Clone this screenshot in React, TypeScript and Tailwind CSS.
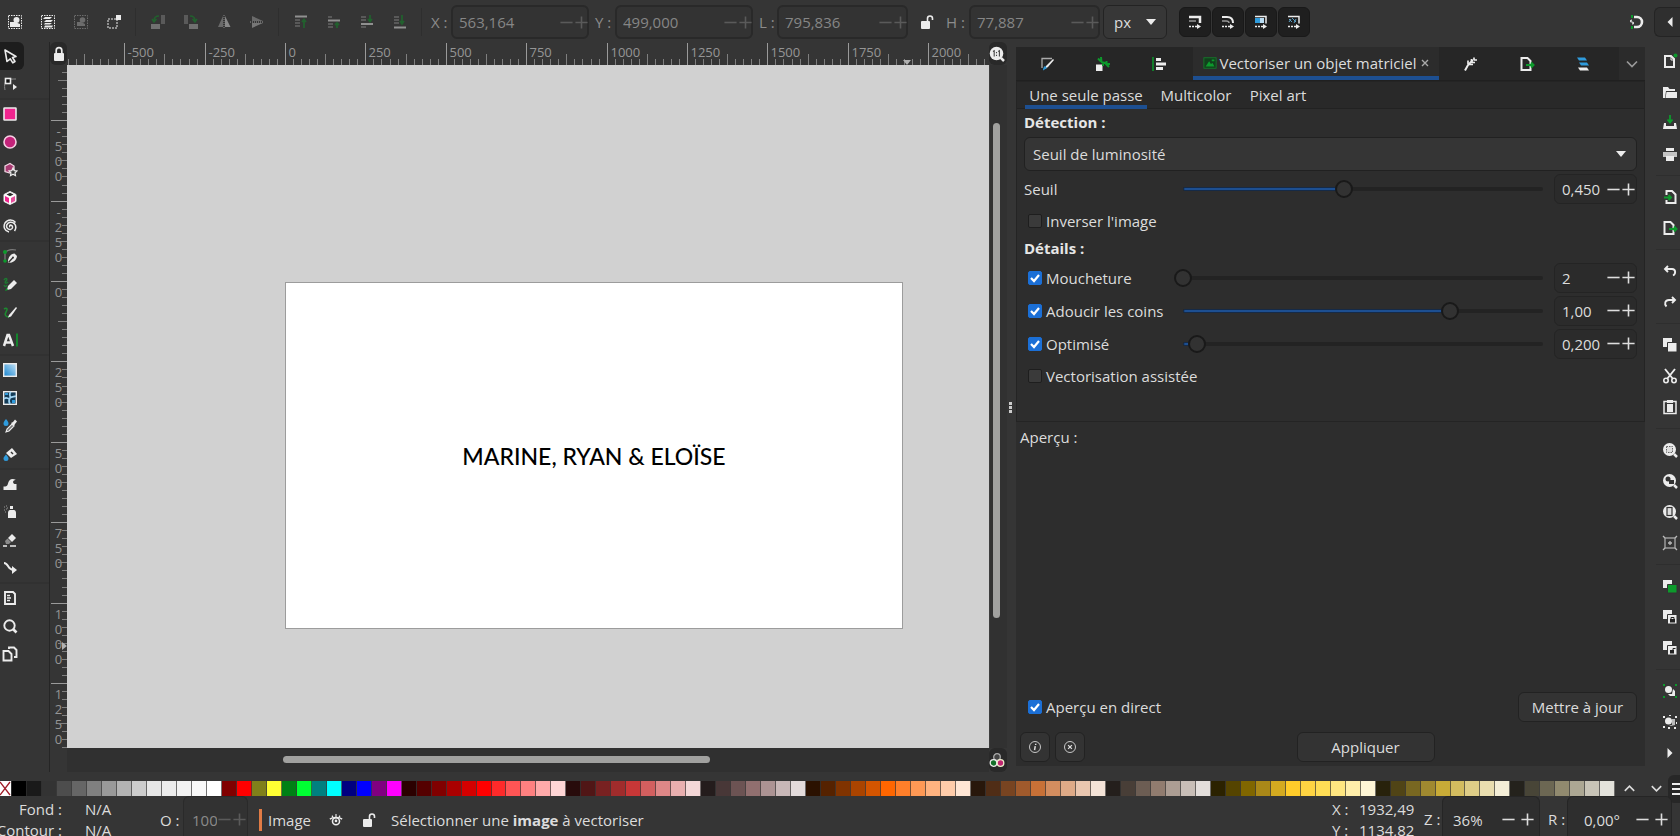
import React, { useEffect, useRef, useState } from "react";

const W = "#ececec";
const G = "#0d9a2c";
const B = "#2f9bdc";
const P = "#f0258f";

const icons: Record<string, React.ReactNode> = {
  selectAll: (
    <>
      <rect x="1.5" y="1.5" width="13" height="13" fill="none" stroke={W} strokeDasharray="1.5 1" />
      <circle cx="9.5" cy="6" r="3" fill={W} />
      <path d="M3 8h5l5 2v3H3z" fill={W} />
    </>
  ),
  selectLayers: (
    <>
      <rect x="1.5" y="1.5" width="13" height="13" fill="none" stroke={W} strokeDasharray="1.5 1" />
      <path d="M5 3h7l-2 2H3zM6 6h7l-2 2H4zM5 9h7l-2 1.600H4zM5 11.500h8l-1 2H4z" fill={W} />
    </>
  ),
  deselect: (
    <g opacity=".3">
      <rect x="1.500" y="1.500" width="13" height="13" fill="none" stroke={W} strokeDasharray="1.5 1" />
      <circle cx="9.500" cy="6" r="2.800" fill={W} />
      <path d="M4 8h4l4 2v2H4z" fill={W} />
    </g>
  ),
  touch: (
    <>
      <rect x="2" y="5" width="9" height="9" fill="none" stroke={W} strokeDasharray="2 1" />
      <rect x="10" y="1" width="5" height="5" fill={W} />
    </>
  ),
  rotL: (
    <>
      <rect x="1" y="10" width="9" height="5" fill="#707070" />
      <rect x="11" y="1" width="4" height="9" fill="#5a5a5a" />
      <path d="M9 2C5 2 4 4 4 7M2 5l2 3 2.500-3" fill="none" stroke="#22602e" strokeWidth="1.500" />
    </>
  ),
  rotR: (
    <>
      <rect x="6" y="10" width="9" height="5" fill="#707070" />
      <rect x="1" y="1" width="4" height="9" fill="#5a5a5a" />
      <path d="M7 2c4 0 5 2 5 5M9.500 5l2.500 3 2-3" fill="none" stroke="#22602e" strokeWidth="1.500" />
    </>
  ),
  flipH: (
    <>
      <path d="M7 2v11H2z" fill="#6a6a6a" />
      <path d="M9 2v11h5.500z" fill="#888" />
      <path d="M8 1v14" stroke="#888" strokeDasharray="1 1" />
    </>
  ),
  flipV: (
    <>
      <path d="M3 2v5h11z" fill="#6a6a6a" />
      <path d="M3 14V9h11z" fill="#777" />
      <path d="M1 8h14" stroke="#999" strokeDasharray="1 1" />
    </>
  ),
  toTop: (
    <>
      <path d="M2 2.500h12" stroke="#909090" strokeWidth="2" />
      <path d="M2 6h5M2 9h5M2 12h5" stroke="#666" strokeWidth="1.500" />
      <path d="M11 14V6M9 8l2-2.500L13 8" fill="none" stroke="#22602e" strokeWidth="1.800" />
    </>
  ),
  raise: (
    <>
      <path d="M2 6.500h12" stroke="#909090" strokeWidth="2" />
      <path d="M2 3h4M2 10h5M2 13h5" stroke="#666" strokeWidth="1.500" />
      <path d="M11 14V9M9 11l2-2 2 2" fill="none" stroke="#22602e" strokeWidth="1.800" />
    </>
  ),
  lower: (
    <>
      <path d="M2 10h12" stroke="#909090" strokeWidth="2" />
      <path d="M2 3h5M2 6h5M2 13h5" stroke="#666" strokeWidth="1.500" />
      <path d="M11 1v6M9 5l2 2.500L13 5" fill="none" stroke="#22602e" strokeWidth="1.800" />
    </>
  ),
  toBottom: (
    <>
      <path d="M2 13.500h12" stroke="#909090" strokeWidth="2" />
      <path d="M2 3h5M2 6h5M2 9h5" stroke="#666" strokeWidth="1.500" />
      <path d="M10 1v9M8 7l2 3 2-3" fill="none" stroke="#22602e" strokeWidth="1.800" />
    </>
  ),
  unlock: (
    <>
      <rect x="2" y="7" width="9" height="8" rx="1" fill={W} />
      <path d="M8.500 8V4.500a2.500 2.500 0 0 1 5 0V6" fill="none" stroke={W} strokeWidth="1.600" />
    </>
  ),
  lock: (
    <>
      <rect x="3" y="7" width="10" height="8" rx="1" fill={W} />
      <path d="M5.200 8V4.500a2.800 2.800 0 0 1 5.600 0V8" fill="none" stroke={W} strokeWidth="1.700" />
    </>
  ),
  scaleStroke: (
    <>
      <path d="M2 3h11v6" fill="none" stroke={W} strokeWidth="2.500" />
      <path d="M2 7h7" stroke="#999" strokeWidth="1.500" />
      <path d="M2 12.500h8" stroke={W} strokeWidth="1.600" strokeDasharray="2 1" />
      <path d="M10 10l4 2.500-4 2.500z" fill={W} />
    </>
  ),
  scaleCorner: (
    <>
      <path d="M2 3h5c4 0 6 2 6 6" fill="none" stroke={W} strokeWidth="2" />
      <path d="M2 7h4c2 0 3 1 3 2" fill="none" stroke="#999" strokeWidth="1.500" />
      <path d="M2 12.500h8" stroke={W} strokeWidth="1.600" strokeDasharray="2 1" />
      <path d="M10 10l4 2.500-4 2.500z" fill={W} />
    </>
  ),
  scaleGrad: (
    <>
      <path d="M2 2.500h11v7" fill="none" stroke={W} strokeWidth="1.500" />
      <path d="M2 4h5v5H2z" fill={B} />
      <path d="M7 4h4v5H7z" fill="#b9dcf3" />
      <path d="M2 12.500h8" stroke={W} strokeWidth="1.600" strokeDasharray="2 1" />
      <path d="M10 10l4 2.500-4 2.500z" fill={W} />
    </>
  ),
  scalePattern: (
    <>
      <path d="M2 2.500h11v7" fill="none" stroke={W} strokeWidth="1.500" />
      <path d="M3 5l3 3M6 4l4 4M3 8l2-3M8 9l2-4" stroke="#5b9fc4" />
      <path d="M2 12.500h8" stroke={W} strokeWidth="1.600" strokeDasharray="2 1" />
      <path d="M10 10l4 2.500-4 2.500z" fill={W} />
    </>
  ),
  snap: (
    <>
      <path d="M6 3h3a5 5 0 0 1 0 10H6" fill="none" stroke={W} strokeWidth="2.600" />
      <path d="M4 1v3M4 12v3" stroke={G} strokeWidth="2" />
      <path d="M4 6c-2 0-2 2 0 2s2 2 0 2" fill="none" stroke={W} strokeWidth="1.200" />
    </>
  ),
  left: <path d="M10.500 3v10L5.500 8z" fill={W} />,
  right: <path d="M5.500 3v10l5-5z" fill={W} />,
  pointer: <path d="M3 2l11 6.500-3.500 1 2.500 4-2.200 1.300-2.500-4L5 13.500z" fill="#1c1c1c" stroke={W} strokeWidth="1.600" strokeLinejoin="round" />,
  node: (
    <>
      <path d="M3 14C2 9 3 5 5 4s6-1 9-1" fill="none" stroke="#888" />
      <rect x="3.500" y="2.500" width="5" height="5" fill="#111" stroke={W} strokeWidth="1.600" />
      <path d="M11 8l4 3-4 3z" fill={W} />
    </>
  ),
  rect: <rect x="2" y="2" width="12" height="12" rx=".5" fill={P} stroke={W} strokeWidth="1.600" />,
  circle: <circle cx="8" cy="8" r="6" fill="#c4237a" stroke="#f6cfe3" strokeWidth="1.600" />,
  star: (
    <>
      <path d="M3 4l5-2.500L12 4v4l-4 3-5-1.500z" fill="#a83a72" stroke="#f0d5e2" strokeWidth="1.300" />
      <path d="M11 6l1.200 2.600 2.800.3-2 2 .5 2.800-2.500-1.400-2.500 1.400.5-2.800-2-2 2.800-.3z" fill="#3a3a3a" stroke={W} strokeWidth="1.200" />
    </>
  ),
  cube: (
    <>
      <path d="M8 1.500l6 3v7l-6 3-6-3v-7z" fill="#fff" stroke={W} />
      <path d="M3 6l4 2v5l-4-2z" fill={P} />
      <path d="M13 6L9 8v5l4-2z" fill="#e6509e" />
      <path d="M8 2.800L11.500 4.500 8 6.300 4.500 4.500z" fill="#2d2d2d" />
    </>
  ),
  spiral: <path d="M8.200 9c-1.200-.6-.4-2.200 1-1.800 2 .6 1.800 3.600-.4 4.200-3 .7-5-2-4-4.500C6 4 10 3.300 12.300 5.600c1.800 2 1.800 5 .2 7.400M7 14C2.500 13 1 8.500 3 5 5.500 1 11 1 13.500 4.500" fill="none" stroke={W} strokeWidth="1.500" />,
  pen: (
    <>
      <path d="M3 14V5c2-3 6-4 11-3" fill="none" stroke="#7c7c7c" strokeWidth="1.200" />
      <circle cx="3" cy="4" r="2" fill={G} />
      <circle cx="3" cy="13" r="1.800" fill={G} />
      <path d="M6 15c-.5-5 2-9 6.500-9.500L15 8c-.5 4-3.500 7-9 7z" fill={W} />
      <path d="M6.500 14.500L11 9.500" stroke="#333" strokeWidth="1.300" />
      <circle cx="11" cy="9.500" r="1" fill="#333" />
    </>
  ),
  pencil: (
    <>
      <path d="M2 4c2-3 4-1 2 1s0 3 2 1M2 9c1 2 2 2 3 0" fill="none" stroke="#1c7a30" strokeWidth="1.400" />
      <path d="M5 14l1-4 6-6 3 3-6 6z" fill={W} />
      <path d="M3 15l1.500-3 1.500 2z" fill={G} />
    </>
  ),
  callig: (
    <>
      <path d="M2 5c3-2 4 0 2 3s0 5 3 5" fill="none" stroke="#1c8a30" strokeWidth="1.600" />
      <path d="M7 11l7-8 1 1-6 8.500-3 1z" fill={W} />
    </>
  ),
  text: (
    <>
      <path d="M2 14L5.500 3h1.500L11 14M4 10.500h5.500" fill="none" stroke={W} strokeWidth="2.500" />
      <path d="M15 1.500v13" stroke={G} strokeWidth="1.600" />
    </>
  ),
  gradient: (
    <>
      <defs>
        <linearGradient id="toolGradient" x1="0" y1="1" x2="1" y2="0">
          <stop offset="0" stopColor="#1583cf" />
          <stop offset="1" stopColor="#c5e3f6" />
        </linearGradient>
      </defs>
      <rect x="1.700" y="1.700" width="12.600" height="12.600" fill="url(#toolGradient)" stroke={W} strokeWidth="1.400" />
    </>
  ),
  mesh: (
    <>
      <rect x="1.700" y="1.700" width="12.600" height="12.600" fill="#123b57" stroke={W} strokeWidth="1.400" />
      <path d="M2 9c3-3 4 1 6-1s4-1 6-2M9 2c-3 2 0 4-1 6s-2 3 0 6" fill="none" stroke="#9fd3f2" strokeWidth="1.700" />
      <path d="M10 10h3v3h-3zM3 3h3v2H3z" fill={B} />
    </>
  ),
  dropper: (
    <>
      <path d="M4 1c2 2.500 2.500 3.500 2.500 4.500a2.500 2.500 0 0 1-5 0C1.500 4.500 2 3.500 4 1z" fill={B} />
      <path d="M4 14l1-3 5-5 2 2-5 5z" fill="#777" stroke={W} strokeWidth="1.100" />
      <path d="M9 5l2-1 2-2.500 2 2L13 6l-1 2z" fill={W} />
    </>
  ),
  bucket: (
    <>
      <path d="M4 7l6-5 5 6-6 4z" fill={W} />
      <path d="M9 6l2 2" stroke="#333" strokeWidth="1.500" />
      <path d="M4 8.500c2 2.500 2.500 3 2.500 4a2.500 2.500 0 0 1-5 0c0-1 .5-1.500 2.500-4z" fill={B} />
    </>
  ),
  tweak: <path d="M1.500 14v-3.500c3 0 4-.5 4.500-3C6.700 3.500 10 1.500 14 4c-3 0-4 2.500-1.500 4H14.500v6z" fill={W} />,
  spray: (
    <>
      <path d="M6 9c0-2 1-3 2-3h4c1 0 2 1 2 3v5H6z" fill={W} />
      <path d="M8 2h3v3H8z" fill={W} />
      <path d="M2 3h1M4 2h1M2 6h1M4 5h1M5 4h1M3 8h1" stroke="#999" />
    </>
  ),
  eraser: (
    <>
      <path d="M6 6l4-4 4 4-4 4z" fill={W} />
      <path d="M3 9l2.500-2.500L9 10l-2 2H4z" fill="#8a8a8a" />
      <path d="M1 14h4M8 14h6" stroke={W} strokeWidth="1.700" />
    </>
  ),
  connector: (
    <>
      <path d="M2 3c5 0 3 7 10 7" fill="none" stroke={W} strokeWidth="2" />
      <path d="M10 6l5 4-5 4z" fill={W} />
    </>
  ),
  measure: (
    <>
      <path d="M3 2h8l2 2v10H3z" fill="none" stroke={W} strokeWidth="1.900" />
      <path d="M5 5.500h3M5 8h4M5 10.500h3" stroke={W} strokeWidth="1.300" />
    </>
  ),
  zoom: (
    <>
      <circle cx="7.500" cy="7.500" r="5.200" fill="none" stroke={W} strokeWidth="1.900" />
      <path d="M11 11l3.500 3.500" stroke={W} strokeWidth="2.600" />
    </>
  ),
  pages: (
    <>
      <path d="M7 3V1.500h5L14.500 4v7H12" fill="none" stroke={W} strokeWidth="1.900" />
      <path d="M1.500 5h5L9.500 8v6.500h-8z" fill="none" stroke={W} strokeWidth="1.900" />
    </>
  ),
  newDoc: (
    <>
      <path d="M3 3h6l3 3v8H3z" fill="none" stroke={W} strokeWidth="2" />
      <path d="M9 3v4h4" fill="none" stroke={W} />
      <circle cx="13.500" cy="2.500" r="2" fill={G} />
    </>
  ),
  open: (
    <>
      <path d="M1 3h5l1.500 2H13v2H4l-1 7H1z" fill={W} />
      <path d="M4.500 8H15v6H3.500z" fill={W} />
    </>
  ),
  save: (
    <>
      <path d="M8 0v7M5.500 4.500L8 7.500l2.500-3" fill="none" stroke={G} strokeWidth="1.800" />
      <path d="M2 8h2v3h8V8h2l1 6H1z" fill={W} />
    </>
  ),
  print: (
    <>
      <path d="M4 2h8v3H4z" fill={W} />
      <path d="M1 6h14v5H1z" fill="#c4c4c4" />
      <path d="M4 10h8v5H4z" fill={W} />
    </>
  ),
  importDoc: (
    <>
      <path d="M4.500 6V2H10l3.500 3.500V14h-9v-3" fill="none" stroke={W} strokeWidth="2" />
      <path d="M2 8.500h7M6.500 6L9 8.500 6.500 11" fill="none" stroke={G} strokeWidth="2" />
    </>
  ),
  exportDoc: (
    <>
      <path d="M2.500 2h6l3 3v9h-9z" fill="none" stroke={W} strokeWidth="2" />
      <path d="M7 9h7M12 6.500L14.500 9 12 11.500" fill="none" stroke={G} strokeWidth="2" />
    </>
  ),
  undo: <path d="M6 3L3 6l3 3M3 6h7c4 0 4 5 1 6.500" fill="none" stroke={W} strokeWidth="1.900" />,
  redo: <path d="M10 3l3 3-3 3M13 6H7c-4 0-5 4-2.500 6.500" fill="none" stroke={W} strokeWidth="1.900" />,
  copy: (
    <>
      <path d="M1 1h9v9H1z" fill={W} />
      <path d="M5.500 5.500h9.500v9.500H5.500z" fill={W} stroke="#333" />
    </>
  ),
  cut: (
    <>
      <path d="M3 1l8 10M13 1L5 11" stroke={W} strokeWidth="1.900" />
      <circle cx="4" cy="12.500" r="2.200" fill="none" stroke={W} strokeWidth="1.600" />
      <circle cx="12" cy="12.500" r="2.200" fill="none" stroke={W} strokeWidth="1.600" />
    </>
  ),
  paste: (
    <>
      <path d="M2 2.500h12v12H2z" fill="none" stroke={W} strokeWidth="1.500" />
      <path d="M5 1h6v3H5zM5 5h6v8H5z" fill={W} />
    </>
  ),
  zoomSel: (
    <>
      <circle cx="7.500" cy="7.500" r="6.500" fill={W} />
      <path d="M12 12l3 3" stroke={W} strokeWidth="2.500" />
      <rect x="4.500" y="4.500" width="6" height="6" fill="#dcdcdc" stroke="#666" strokeDasharray="1.500 1" />
    </>
  ),
  zoomDraw: (
    <>
      <circle cx="7.500" cy="7.500" r="6.500" fill={W} />
      <path d="M12 12l3 3" stroke={W} strokeWidth="2.500" />
      <circle cx="6" cy="6" r="2.500" fill="#333" />
      <path d="M7 7h5v4H7z" fill="#333" />
    </>
  ),
  zoomPage: (
    <>
      <circle cx="7.500" cy="7.500" r="6.500" fill={W} />
      <path d="M12 12l3 3" stroke={W} strokeWidth="2.500" />
      <rect x="5" y="3.500" width="5" height="8" fill="#ddd" stroke="#333" strokeWidth="1.200" />
    </>
  ),
  zoomCenter: (
    <>
      <rect x="3" y="3" width="10" height="10" fill="none" stroke="#aaa" strokeWidth="1.300" />
      <path d="M1 1l2 2M15 1l-2 2M1 15l2-2M15 15l-2-2M8 6v4M6 8h4" stroke="#bbb" strokeWidth="1.300" />
    </>
  ),
  duplicate: (
    <>
      <path d="M1 2h9v8H1z" fill={W} />
      <path d="M5.500 6.500H15V15H5.500z" fill={G} stroke="#333" />
    </>
  ),
  clone: (
    <>
      <path d="M1 1h9v9H1z" fill={W} />
      <path d="M5.500 5.500H15V15H5.500z" fill={W} stroke="#333" />
      <path d="M8 10h5v3.500H8z" fill="#222" />
      <path d="M9 10V8.500h3V10" fill="none" stroke="#222" />
    </>
  ),
  unclone: (
    <>
      <path d="M1 1h9v9H1z" fill={W} />
      <path d="M5.500 5.500H15V15H5.500z" fill={W} stroke="#333" />
      <path d="M8 10h4v3.500H8z" fill="#222" />
      <path d="M11 10V8.500h2.500" fill="none" stroke="#222" />
    </>
  ),
  group: (
    <>
      <path d="M1 1h2v2H1zM13 1h2v2h-2zM1 13h2v2H1zM13 13h2v2h-2z" fill={G} />
      <circle cx="6.500" cy="6.500" r="3.500" fill={W} />
      <path d="M11 6l2 2v5H8l-2-2h4z" fill={W} />
    </>
  ),
  ungroup: (
    <>
      <path d="M1 2h2v2H1zM7 1h2v1H7zM13 2h2v2h-2zM1 12h2v2H1zM6 13h2v2H6zM12 13h2v2h-2zM14 8h1v2h-1z" fill={W} />
      <circle cx="6.500" cy="7" r="3.500" fill={W} />
      <path d="M10 5h3v6l-4 1-2-1h3z" fill="#bbb" />
    </>
  ),
  fillStroke: (
    <>
      <path d="M3 12V2.500h10" fill="none" stroke="#aaa" strokeWidth="1.300" />
      <path d="M14 3l1 1-6 7-3 2 1-3z" fill={W} />
      <path d="M6 10l2 2-4 2.500c0-2 .5-3.500 2-4.500z" fill={B} />
    </>
  ),
  nodeWrench: (
    <>
      <rect x="1" y="8.500" width="6.500" height="6.500" fill={W} />
      <path d="M3 2.500l3 3M6 1l.5 5M6 6l4 1 4 4M11.500 5l0 3 3.500 0M8 7v3" fill="none" stroke={G} strokeWidth="2" />
    </>
  ),
  align: (
    <>
      <path d="M2 1v14" stroke={G} strokeWidth="1.500" />
      <path d="M5 2h5v3H5zM5 6.500h10v3H5zM5 11h7v3H5z" fill={W} />
    </>
  ),
  trace: (
    <>
      <rect x="1" y="2" width="14" height="12" fill="#12401d" stroke="#157a2a" />
      <path d="M3 12l4-6 2 3 2-1 2 4zM10 4h3v2h-3z" fill={G} />
    </>
  ),
  effects: (
    <>
      <path d="M2 14.500L5 9l5-5" fill="none" stroke={W} strokeWidth="2" />
      <path d="M5.500 8.500h4.500M5 8V4.500M8 6.500h4M8.500 5.500V3M11 4h3M11 4V1.500" fill="none" stroke={W} strokeWidth="1.700" />
    </>
  ),
  layers: (
    <>
      <path d="M2 1.500h8l2 3H4z" fill={B} />
      <path d="M4 6.500h8l2 3H6z" fill={B} />
      <path d="M3 11.500h9l2 3H5z" fill={W} />
    </>
  ),
  zoom11: (
    <>
      <circle cx="7.500" cy="7.500" r="6.800" fill={W} />
      <path d="M12 12l3 3" stroke={W} strokeWidth="2.500" />
      <path d="M4 5.500l1.200-.8V10.500M9.200 5.500l1.200-.8V10.500M7.500 6v1.200M7.500 8.800V10" fill="none" stroke="#444" strokeWidth="1.100" />
    </>
  ),
  cms: (
    <>
      <circle cx="8" cy="5" r="3.300" fill="#444" stroke="#aaa" strokeWidth="1.300" />
      <circle cx="4.500" cy="11" r="3.300" fill="#14702a" stroke={W} strokeWidth="1.300" />
      <circle cx="11.500" cy="11" r="3.300" fill="#c02672" stroke="#eec" strokeWidth="1.300" />
    </>
  ),
  info: (
    <>
      <circle cx="8" cy="8" r="6.300" fill="none" stroke="#ccc" strokeWidth="1.100" />
      <path d="M8.800 4.300v1.500M8.300 7l-.8 4.700" stroke="#ddd" strokeWidth="1.700" />
    </>
  ),
  reset: (
    <>
      <circle cx="8" cy="8" r="6.300" fill="none" stroke="#ccc" strokeWidth="1.100" />
      <path d="M5.800 5.800l4.400 4.400M10.200 5.800l-4.400 4.400" stroke="#ddd" strokeWidth="1.400" />
    </>
  ),
  eye: (
    <>
      <path d="M1 7c3-2.500 11-2.500 14 0" fill="none" stroke={W} strokeWidth="1.600" />
      <circle cx="8" cy="9.500" r="4" fill="none" stroke={W} strokeWidth="1.800" />
      <circle cx="8" cy="9" r="1.500" fill={W} />
      <path d="M8 1v4M3.500 3l1 2M12.500 3l-1 2" stroke={W} strokeWidth="1.300" />
    </>
  ),
  chevronDown: <path d="M3 5.500l5 5 5-5" fill="none" stroke="currentColor" strokeWidth="1.700" />,
  chevronUp: <path d="M3 10.500l5-5 5 5" fill="none" stroke="currentColor" strokeWidth="1.700" />,
  menu: <path d="M2 3h14M2 8h14M2 13h14" stroke={W} strokeWidth="1.800" />,
};

function Icon({ name, className = "size-4" }: { name: string; className?: string }) {
  return (
    <svg viewBox="0 0 16 16" aria-hidden="true" className={`shrink-0 ${className}`}>
      {icons[name]}
    </svg>
  );
}

function Steppers({ className, size = "size-[15px]" }: { className: string; size?: string }) {
  return (
    <div className={`flex items-center ${className}`}>
      <button type="button" aria-label="Diminuer">
        <svg viewBox="0 0 16 16" className={size}><path d="M1.500 8h13" stroke="currentColor" strokeWidth="1.700" /></svg>
      </button>
      <button type="button" aria-label="Augmenter">
        <svg viewBox="0 0 16 16" className={size}><path d="M1.500 8h13M8 1.500v13" stroke="currentColor" strokeWidth="1.700" /></svg>
      </button>
    </div>
  );
}

function TopField({ label, value, labelClass, fieldClass }: { label: string; value: string; labelClass: string; fieldClass: string }) {
  return (
    <>
      <label htmlFor={`f-${label}`} className={`shrink-0 text-[#8c8c8c] ${labelClass}`}>{label} :</label>
      <div className={`flex h-[34px] shrink-0 items-center rounded-md border-2 border-[#292929] bg-[#333333] pl-1.5 text-[#868686] ${fieldClass}`}>
        <input id={`f-${label}`} defaultValue={value} className="w-0 flex-1 bg-transparent outline-none" />
        <Steppers className="-mr-0.5 text-[#5a5a5a]" />
      </div>
    </>
  );
}

const topGroups = [
  ["selectAll", "selectLayers", "deselect", "touch"],
  ["rotL", "rotR", "flipH", "flipV"],
  ["toTop", "raise", "lower", "toBottom"],
];

function TopBar() {
  return (
    <header className="-ml-0.5 flex h-[42px] shrink-0 items-center pt-0.5">
      {topGroups.map((group, i) => (
        <div key={i} className="flex items-center">
          {group.map((n) => (
            <button key={n} type="button" aria-label={n} className="flex w-[33px] justify-center"><Icon name={n} /></button>
          ))}
          <div className="flex w-[11px] justify-center"><div className="h-7 w-px bg-[#2e2e2e]" /></div>
        </div>
      ))}
      <TopField label="X" value="563,164" labelClass="w-6 pl-1" fieldClass="w-[138px]" />
      <TopField label="Y" value="499,000" labelClass="w-[26px] pl-1.5" fieldClass="w-[138px]" />
      <TopField label="L" value="795,836" labelClass="w-6 pl-1.5" fieldClass="w-[131px]" />
      <button type="button" aria-label="Verrouiller le ratio" className="flex w-[38px] justify-center"><Icon name="unlock" /></button>
      <TopField label="H" value="77,887" labelClass="w-[23px]" fieldClass="w-[131px]" />
      <div className="ml-[3px] grid h-[34px] w-16 items-center rounded-md border border-[#232323] bg-[#373737]">
        <select aria-label="Unité" className="h-full w-full appearance-none bg-transparent pl-2.5 outline-none [grid-area:1/1]">
          <option>px</option>
        </select>
        <svg viewBox="0 0 10 6" className="pointer-events-none mr-2.5 h-1.5 w-2.5 justify-self-end [grid-area:1/1]"><path d="M0 0h10L5 6z" fill={W} /></svg>
      </div>
      <div className="ml-3 flex gap-px">
        {["scaleStroke", "scaleCorner", "scaleGrad", "scalePattern"].map((n) => (
          <button key={n} type="button" aria-label={n} className="flex h-[30px] w-8 items-center justify-center rounded-md border border-[#191919] bg-[#1f1f1f]"><Icon name={n} className="size-4" /></button>
        ))}
      </div>
      <button type="button" aria-label="Magnétisme" className="mr-2.5 ml-auto"><Icon name="snap" /></button>
      <button type="button" aria-label="Options de magnétisme" className="flex h-[30px] w-[26px] items-center justify-end rounded-l-md border border-r-0 border-[#242424] bg-[#2f2f2f] pr-0.5"><Icon name="left" /></button>
    </header>
  );
}

const toolGroups = [
  ["pointer", "node"],
  ["rect", "circle", "star", "cube", "spiral"],
  ["pen", "pencil", "callig", "text"],
  ["gradient", "mesh", "dropper", "bucket"],
  ["tweak", "spray", "eraser", "connector"],
  ["measure", "zoom", "pages"],
];

function Toolbox() {
  return (
    <nav className="flex w-[50px] shrink-0 flex-col border-r border-[#252525]">
      {toolGroups.map((group, i) => (
        <div key={i} className={i ? "border-t-2 border-[#313131]" : ""}>
          {group.map((n) => (
            <button
              key={n}
              type="button"
              aria-label={n}
              className={`flex h-7 w-6 items-center rounded-r-md pl-0.5 ${n === "pointer" ? "bg-[#1d1d1d]" : ""}`}
            >
              <Icon name={n} />
            </button>
          ))}
        </div>
      ))}
    </nav>
  );
}

const commandGroups = [
  ["newDoc", "open", "save", "print"],
  ["importDoc", "exportDoc"],
  ["undo", "redo"],
  ["copy", "cut", "paste"],
  ["zoomSel", "zoomDraw", "zoomPage", "zoomCenter"],
  ["duplicate", "clone", "unclone"],
  ["group", "ungroup", "right"],
];

function Commands() {
  return (
    <nav className="flex w-[35px] shrink-0 flex-col gap-3 pt-[3px]">
      {commandGroups.map((group, i) => (
        <div key={i} className="relative flex flex-col items-end pr-0.5">
          {i > 0 && <div className="absolute -top-1.5 right-0 h-px w-6 bg-[#2e2e2e]" />}
          {group.map((n) => (
            <button key={n} type="button" aria-label={n} className="flex h-[31px] items-center"><Icon name={n} /></button>
          ))}
        </div>
      ))}
    </nav>
  );
}

// Ruler scale: 250 user units span 80.4 screen pixels.
const STEP = 80.4;

function ticks(origin: number, length: number) {
  const out: { pos: number; kind: number; value: number }[] = [];
  const unit = STEP / 10;
  for (let i = Math.ceil(-origin / unit); origin + i * unit < length; i++) {
    const r = ((i % 10) + 10) % 10;
    out.push({ pos: Math.round(origin + i * unit) + 0.5, kind: r === 0 ? 2 : r === 5 ? 1 : 0, value: i * 25 });
  }
  return out;
}

function useSize() {
  const ref = useRef<SVGSVGElement>(null);
  const [size, setSize] = useState({ width: 0, height: 0 });
  useEffect(() => {
    if (!ref.current) return;
    const measure = () => {
      const r = ref.current?.getBoundingClientRect();
      if (r) setSize({ width: r.width, height: r.height });
    };
    measure();
    const observer = new ResizeObserver(measure);
    observer.observe(ref.current);
    return () => observer.disconnect();
  }, []);
  return [ref, size] as const;
}

function HRuler() {
  const [ref, { width }] = useSize();
  return (
    <svg ref={ref} className="h-[23px] w-full overflow-hidden" aria-hidden="true">
      {ticks(218, width).map((t) => (
        <g key={t.value}>
          <path d={`M${t.pos} ${[17, 12, 1][t.kind]}V23`} stroke={t.kind === 2 ? "#9a9a9a" : "#7f7f7f"} />
          {t.kind === 2 && <text x={t.pos + 3} y="15" fontSize="13" fill="#959595">{t.value}</text>}
        </g>
      ))}
      <path d="M836 18h8l-4 5z" fill="#b0b0b0" />
    </svg>
  );
}

function VRuler() {
  const [ref, { height }] = useSize();
  return (
    <svg ref={ref} className="h-full w-[17px] overflow-hidden" aria-hidden="true">
      {ticks(216, height).map((t) => (
        <g key={t.value}>
          <path d={`M${[12, 8, 1][t.kind]} ${t.pos}H17`} stroke={t.kind === 2 ? "#9a9a9a" : "#7f7f7f"} />
          {t.kind === 2 &&
            String(t.value).split("").map((c, i) => (
              <text key={i} x="8.500" y={t.pos + 15 + i * 15} textAnchor="middle" fontSize="13" fill="#959595">{c}</text>
            ))}
        </g>
      ))}
      <path d="M12 577v8l5-4z" fill="#b0b0b0" />
    </svg>
  );
}

function Editor() {
  return (
    <section className="grid min-w-0 flex-1 grid-cols-[17px_1fr_18px] grid-rows-[23px_1fr_24px]">
      <button type="button" aria-label="Verrouiller les guides" className="flex items-center justify-center rounded-md bg-[#292929]"><Icon name="lock" /></button>
      <HRuler />
      <button type="button" aria-label="Zoom 1:1" className="flex items-center justify-center rounded-md bg-[#292929] pr-0.5"><Icon name="zoom11" /></button>
      <VRuler />
      <main className="relative overflow-hidden bg-[#d1d1d1]">
        <div className="absolute top-[217px] left-[218px] flex h-[347px] w-[618px] items-center justify-center border border-[#9c9c9c] bg-white font-['Lato'] text-[23px] font-medium whitespace-nowrap text-black">
          MARINE, RYAN &amp; ELOÏSE
        </div>
      </main>
      <div className="border-l border-[#3d3d3d] bg-[#313131] pl-[3px]">
        <div className="relative w-[7px] rounded-full bg-[#a1a19f]" style={{ height: "72.5%", top: "8.5%" }} />
      </div>
      <div />
      <div className="bg-[#303030] pt-2">
        <div className="h-[7px] rounded-full bg-[#a1a19f]" style={{ width: "46.3%", marginLeft: "23.4%" }} />
      </div>
      <button type="button" aria-label="Gestion des couleurs" className="flex items-center justify-center rounded-md bg-[#292929] pr-0.5"><Icon name="cms" /></button>
    </section>
  );
}

function Check({ label, checked, className = "" }: { label: string; checked: boolean; className?: string }) {
  const [on, setOn] = useState(checked);
  return (
    <label className={`flex items-center gap-1 pl-1 ${className}`}>
      <span className="grid size-3.5 place-items-center">
        <input
          type="checkbox"
          checked={on}
          onChange={(e) => setOn(e.target.checked)}
          className="size-3.5 appearance-none rounded-xs border border-[#1e1e1e] bg-[#3a3a3a] checked:border-[#1b6fd6] checked:bg-[#1b6fd6] [grid-area:1/1]"
        />
        {on && (
          <svg viewBox="0 0 14 14" className="pointer-events-none size-3.5 [grid-area:1/1]"><path d="M3 7l3 3 5-6" fill="none" stroke="#fff" strokeWidth="2.200" /></svg>
        )}
      </span>
      {label}
    </label>
  );
}

function SliderRow({ name, checked, percent, value, height }: { name: string; checked?: boolean; percent: number; value: string; height: string }) {
  const [pos, setPos] = useState(percent);
  return (
    <div className={`flex items-center ${height}`}>
      <div className="w-[150px] shrink-0">
        {checked === undefined ? <label htmlFor={`s-${name}`}>{name}</label> : <Check label={name} checked={checked} />}
      </div>
      <div className="grid flex-1 items-center">
        <div className="mx-[9px] h-1 rounded-full bg-[#232323] [grid-area:1/1]">
          <div className="h-1 rounded-full border border-[#152a47] bg-[#1d4f91]" style={{ width: `${pos}%` }} />
        </div>
        <input
          id={`s-${name}`}
          aria-label={name}
          type="range"
          step="0.1"
          value={pos}
          onChange={(e) => setPos(Number(e.target.value))}
          className="h-[18px] w-full appearance-none bg-transparent [grid-area:1/1] [&::-webkit-slider-thumb]:size-[18px] [&::-webkit-slider-thumb]:appearance-none [&::-webkit-slider-thumb]:rounded-full [&::-webkit-slider-thumb]:border-2 [&::-webkit-slider-thumb]:border-[#191919] [&::-webkit-slider-thumb]:bg-[#323232]"
        />
      </div>
      <div className="ml-0.5 flex h-[30px] w-[83px] items-center rounded-md border border-[#242424] bg-[#2b2b2b] pl-[7px]">
        <input aria-label={`${name} valeur`} defaultValue={value} className="w-0 flex-1 bg-transparent outline-none" />
        <Steppers className="text-[#dedede]" />
      </div>
    </div>
  );
}

const btn = "flex items-center justify-center rounded-md border border-[#222222] bg-[#333333]";

function TabIcon({ name }: { name: string }) {
  return <button type="button" aria-label={name} className="flex w-14 items-center justify-center"><Icon name={name} /></button>;
}

function Panel() {
  return (
    <aside className="mt-[5px] mb-1.5 flex w-[629px] shrink-0 flex-col bg-[#2d2d2d]">
      <div className="flex h-[34px] shrink-0 items-stretch border-b border-[#202020] bg-[#262626] pl-[3px]">
        <TabIcon name="fillStroke" />
        <TabIcon name="nodeWrench" />
        <TabIcon name="align" />
        <button type="button" className="ml-1.5 flex w-[246px] items-center justify-center gap-0.5 border-b-4 border-[#1d4f91] bg-[#2c2c2c] pt-0.5 whitespace-nowrap">
          <Icon name="trace" className="size-3.5" />
          Vectoriser un objet matriciel
          <svg viewBox="0 0 8 8" className="ml-0.5 size-2"><path d="M1 1l6 6M7 1L1 7" stroke="#aaa" strokeWidth="1.400" /></svg>
        </button>
        <div className="w-1" />
        <TabIcon name="effects" />
        <TabIcon name="exportDoc" />
        <TabIcon name="layers" />
        <button type="button" aria-label="Plus d’onglets" className="ml-auto flex w-[26px] items-center justify-center bg-[#2b2b2b] text-[#999999]"><Icon name="chevronDown" /></button>
      </div>
      <div className="flex h-[341px] shrink-0 flex-col border border-[#242424]">
        <div className="flex h-[27px] shrink-0 border-b border-[#222222] bg-[#292929] pl-2">
          <button type="button" className="-mb-px w-[122px] border-b-4 border-[#1d4f91] pt-0.5 leading-5">Une seule passe</button>
          <button type="button" className="w-[98px] leading-5">Multicolor</button>
          <button type="button" className="w-[66px] leading-5">Pixel art</button>
        </div>
        <div className="pr-[7px] pl-[7px]">
          <h2 className="flex h-7 items-center pb-0.5 font-bold text-[#e6e6e6]">Détection :</h2>
          <div className="grid h-[34px] items-center rounded-md border border-[#212121] bg-[#353535]">
            <select aria-label="Détection" className="h-full w-full appearance-none bg-transparent pl-2 outline-none [grid-area:1/1]">
              <option>Seuil de luminosité</option>
            </select>
            <svg viewBox="0 0 10 6" className="pointer-events-none mr-2.5 h-1.5 w-2.5 justify-self-end [grid-area:1/1]"><path d="M0 0h10L5 6z" fill={W} /></svg>
          </div>
          <SliderRow name="Seuil" percent={44.7} value="0,450" height="h-9" />
          <Check label="Inverser l'image" checked={false} className="h-7" />
          <h2 className="flex h-[26px] items-center font-bold text-[#e6e6e6]">Détails :</h2>
          <SliderRow name="Moucheture" checked percent={0} value="2" height="h-[33px]" />
          <SliderRow name="Adoucir les coins" checked percent={74.2} value="1,00" height="h-[33px]" />
          <SliderRow name="Optimisé" checked percent={4} value="0,200" height="h-[33px]" />
          <Check label="Vectorisation assistée" checked={false} className="h-8" />
        </div>
      </div>
      <div className="flex flex-1 flex-col pt-[3px] pr-2 pb-1 pl-1">
        <p className="leading-6">Aperçu :</p>
        <div className="mt-auto flex h-[30px] items-center justify-between pl-1">
          <Check label="Aperçu en direct" checked />
          <button type="button" className={`${btn} h-[30px] w-[119px]`}>Mettre à jour</button>
        </div>
        <div className="mt-2.5 grid grid-cols-[1fr_auto_1fr] items-center">
          <div className="flex gap-[5px]">
            <button type="button" aria-label="Aide" className={`${btn} size-[30px]`}><Icon name="info" className="size-3.5" /></button>
            <button type="button" aria-label="Réinitialiser" className={`${btn} size-[30px]`}><Icon name="reset" className="size-3.5" /></button>
          </div>
          <button type="button" className={`${btn} mr-[-74px] h-[30px] w-[138px]`}>Appliquer</button>
        </div>
      </div>
    </aside>
  );
}

const swatches = (
  "000000 1a1a1a 333333 4d4d4d 666666 808080 999999 b3b3b3 cccccc e6e6e6 ececec f2f2f2 f9f9f9 ffffff " +
  "800000 ff0000 80801a ffff33 008015 00ff33 008080 00ffff 000080 0000ff 800080 ff00ff " +
  "2b0000 550000 800000 aa0000 d40000 ff0000 ff2a2a ff5555 ff8080 ffaaaa ffd5d5 " +
  "280b0b 501616 782121 a02c2c c83737 d35f5f de8787 e9afaf f4d7d7 " +
  "241c1c 483737 6c5353 916f6f ac9393 c8b7b7 e3dbdb " +
  "2b1100 552200 803300 aa4400 d45500 ff6600 ff7f2a ff9955 ffb380 ffccaa ffe6d5 " +
  "28170b 502d16 784421 a05a2c c87137 d38d5f deaa87 e9c6af f4e3d7 " +
  "241f1c 483e37 6c5d53 917c6f ac9d93 c8beb7 e3dedb " +
  "2b2200 554400 806600 aa8818 d4aa20 ffcc2a ffd442 ffdd55 ffe680 ffeeaa fff6d5 " +
  "28220b 504416 786721 a08930 c8ab37 d3bc5f decd87 e9ddaf f4eed7 " +
  "24221c 484537 6c6753 918a6f aca793 c8c4b7 e3e2db"
).split(" ");

function Palette() {
  return (
    <div className="mt-[9px] flex h-[15px] shrink-0 items-center">
      <div className="flex h-[15px] flex-1">
        <button type="button" aria-label="Aucune couleur" className="w-3 border-r border-[#2c2c2c] bg-white">
          <svg viewBox="0 0 11 15" className="h-full w-full"><path d="M0 1l10 13M10 1L0 14" stroke="#a01c28" strokeWidth="1.300" /></svg>
        </button>
        {swatches.map((c, i) => (
          <button key={i} type="button" aria-label={`#${c}`} className="flex-1 border-r border-[#3a3a3a]/70 bg-clip-border" style={{ backgroundColor: `#${c}` }} />
        ))}
      </div>
      <button type="button" aria-label="Monter" className="ml-1.5"><Icon name="chevronUp" className="size-[15px]" /></button>
      <button type="button" aria-label="Descendre" className="ml-3"><Icon name="chevronDown" className="size-[15px]" /></button>
      <div className="ml-1 flex h-7 w-3 items-center rounded-l-md bg-[#272727] pl-0.5">
        <button type="button" aria-label="Menu de la palette" className="overflow-hidden"><Icon name="menu" className="size-4" /></button>
      </div>
    </div>
  );
}

function StatusBar() {
  return (
    <footer className="flex h-10 shrink-0 items-center overflow-hidden">
      <div className="grid h-10 w-[160px] grid-cols-[62px_1fr] items-start gap-x-[23px] pt-[3px] text-right leading-[21px]">
        <span>Fond :</span>
        <span className="text-left">N/A</span>
        <span className="-ml-2 whitespace-nowrap">Contour :</span>
        <span className="text-left">N/A</span>
      </div>
      <label htmlFor="opacity" className="mt-2 w-[23px]">O :</label>
      <div className="flex h-10 w-[65px] items-center rounded-t-md border border-b-0 border-[#2a2a2a] bg-[#323232] pt-1.5 pl-2 text-[#8a8a8a]">
        <input id="opacity" defaultValue="100" className="w-0 flex-1 bg-transparent outline-none" />
        <Steppers className="text-[#5a5a5a]" />
      </div>
      <div className="mt-2 ml-[11px] h-[22px] w-[3px] bg-[#e07b45]" />
      <span className="mt-2 ml-1.5 w-[61px]">Image</span>
      <button type="button" aria-label="Visibilité" className="mt-2"><Icon name="eye" className="size-3.5" /></button>
      <button type="button" aria-label="Verrou" className="mt-2 ml-[18px]"><Icon name="unlock" className="size-4" /></button>
      <p className="mt-2 ml-3.5">Sélectionner une <b>image</b> à vectoriser</p>
      <div className="ml-auto grid h-10 grid-cols-[27px_65px] pt-[3px] leading-[21px]">
        <span>X :</span><span>1932,49</span>
        <span>Y :</span><span>1134,82</span>
      </div>
      <label htmlFor="zoom" className="mt-1.5 w-[18px] whitespace-nowrap">Z :</label>
      <div className="flex h-10 w-[98px] items-center rounded-t-md border border-b-0 border-[#252525] bg-[#2e2e2e] pt-1.5 pr-1 pl-2.5">
        <input id="zoom" defaultValue="36%" className="w-0 flex-1 bg-transparent outline-none" />
        <Steppers className="gap-1" />
      </div>
      <label htmlFor="rotation" className="mt-1.5 ml-2 w-[19px] whitespace-nowrap">R :</label>
      <div className="mr-2 flex h-10 w-[105px] items-center rounded-t-md border border-b-0 border-[#252525] bg-[#2e2e2e] pt-1.5 pr-0.5 pl-4">
        <input id="rotation" defaultValue="0,00°" className="w-0 flex-1 bg-transparent outline-none" />
        <Steppers className="gap-1" />
      </div>
    </footer>
  );
}

export default function App() {
  return (
    <div className="flex h-screen flex-col overflow-hidden bg-[#353535] font-['Open_Sans','Noto_Sans',sans-serif] text-[15px] leading-5 text-[#dcdcdc]">
      <TopBar />
      <div className="flex min-h-0 flex-1">
        <Toolbox />
        <Editor />
        <div className="flex w-[9px] shrink-0 flex-col items-start justify-center gap-px pl-0.5">
          <div className="size-[3px] bg-[#cccccc]" />
          <div className="size-[3px] bg-[#cccccc]" />
          <div className="size-[3px] bg-[#cccccc]" />
        </div>
        <Panel />
        <Commands />
      </div>
      <Palette />
      <StatusBar />
    </div>
  );
}
